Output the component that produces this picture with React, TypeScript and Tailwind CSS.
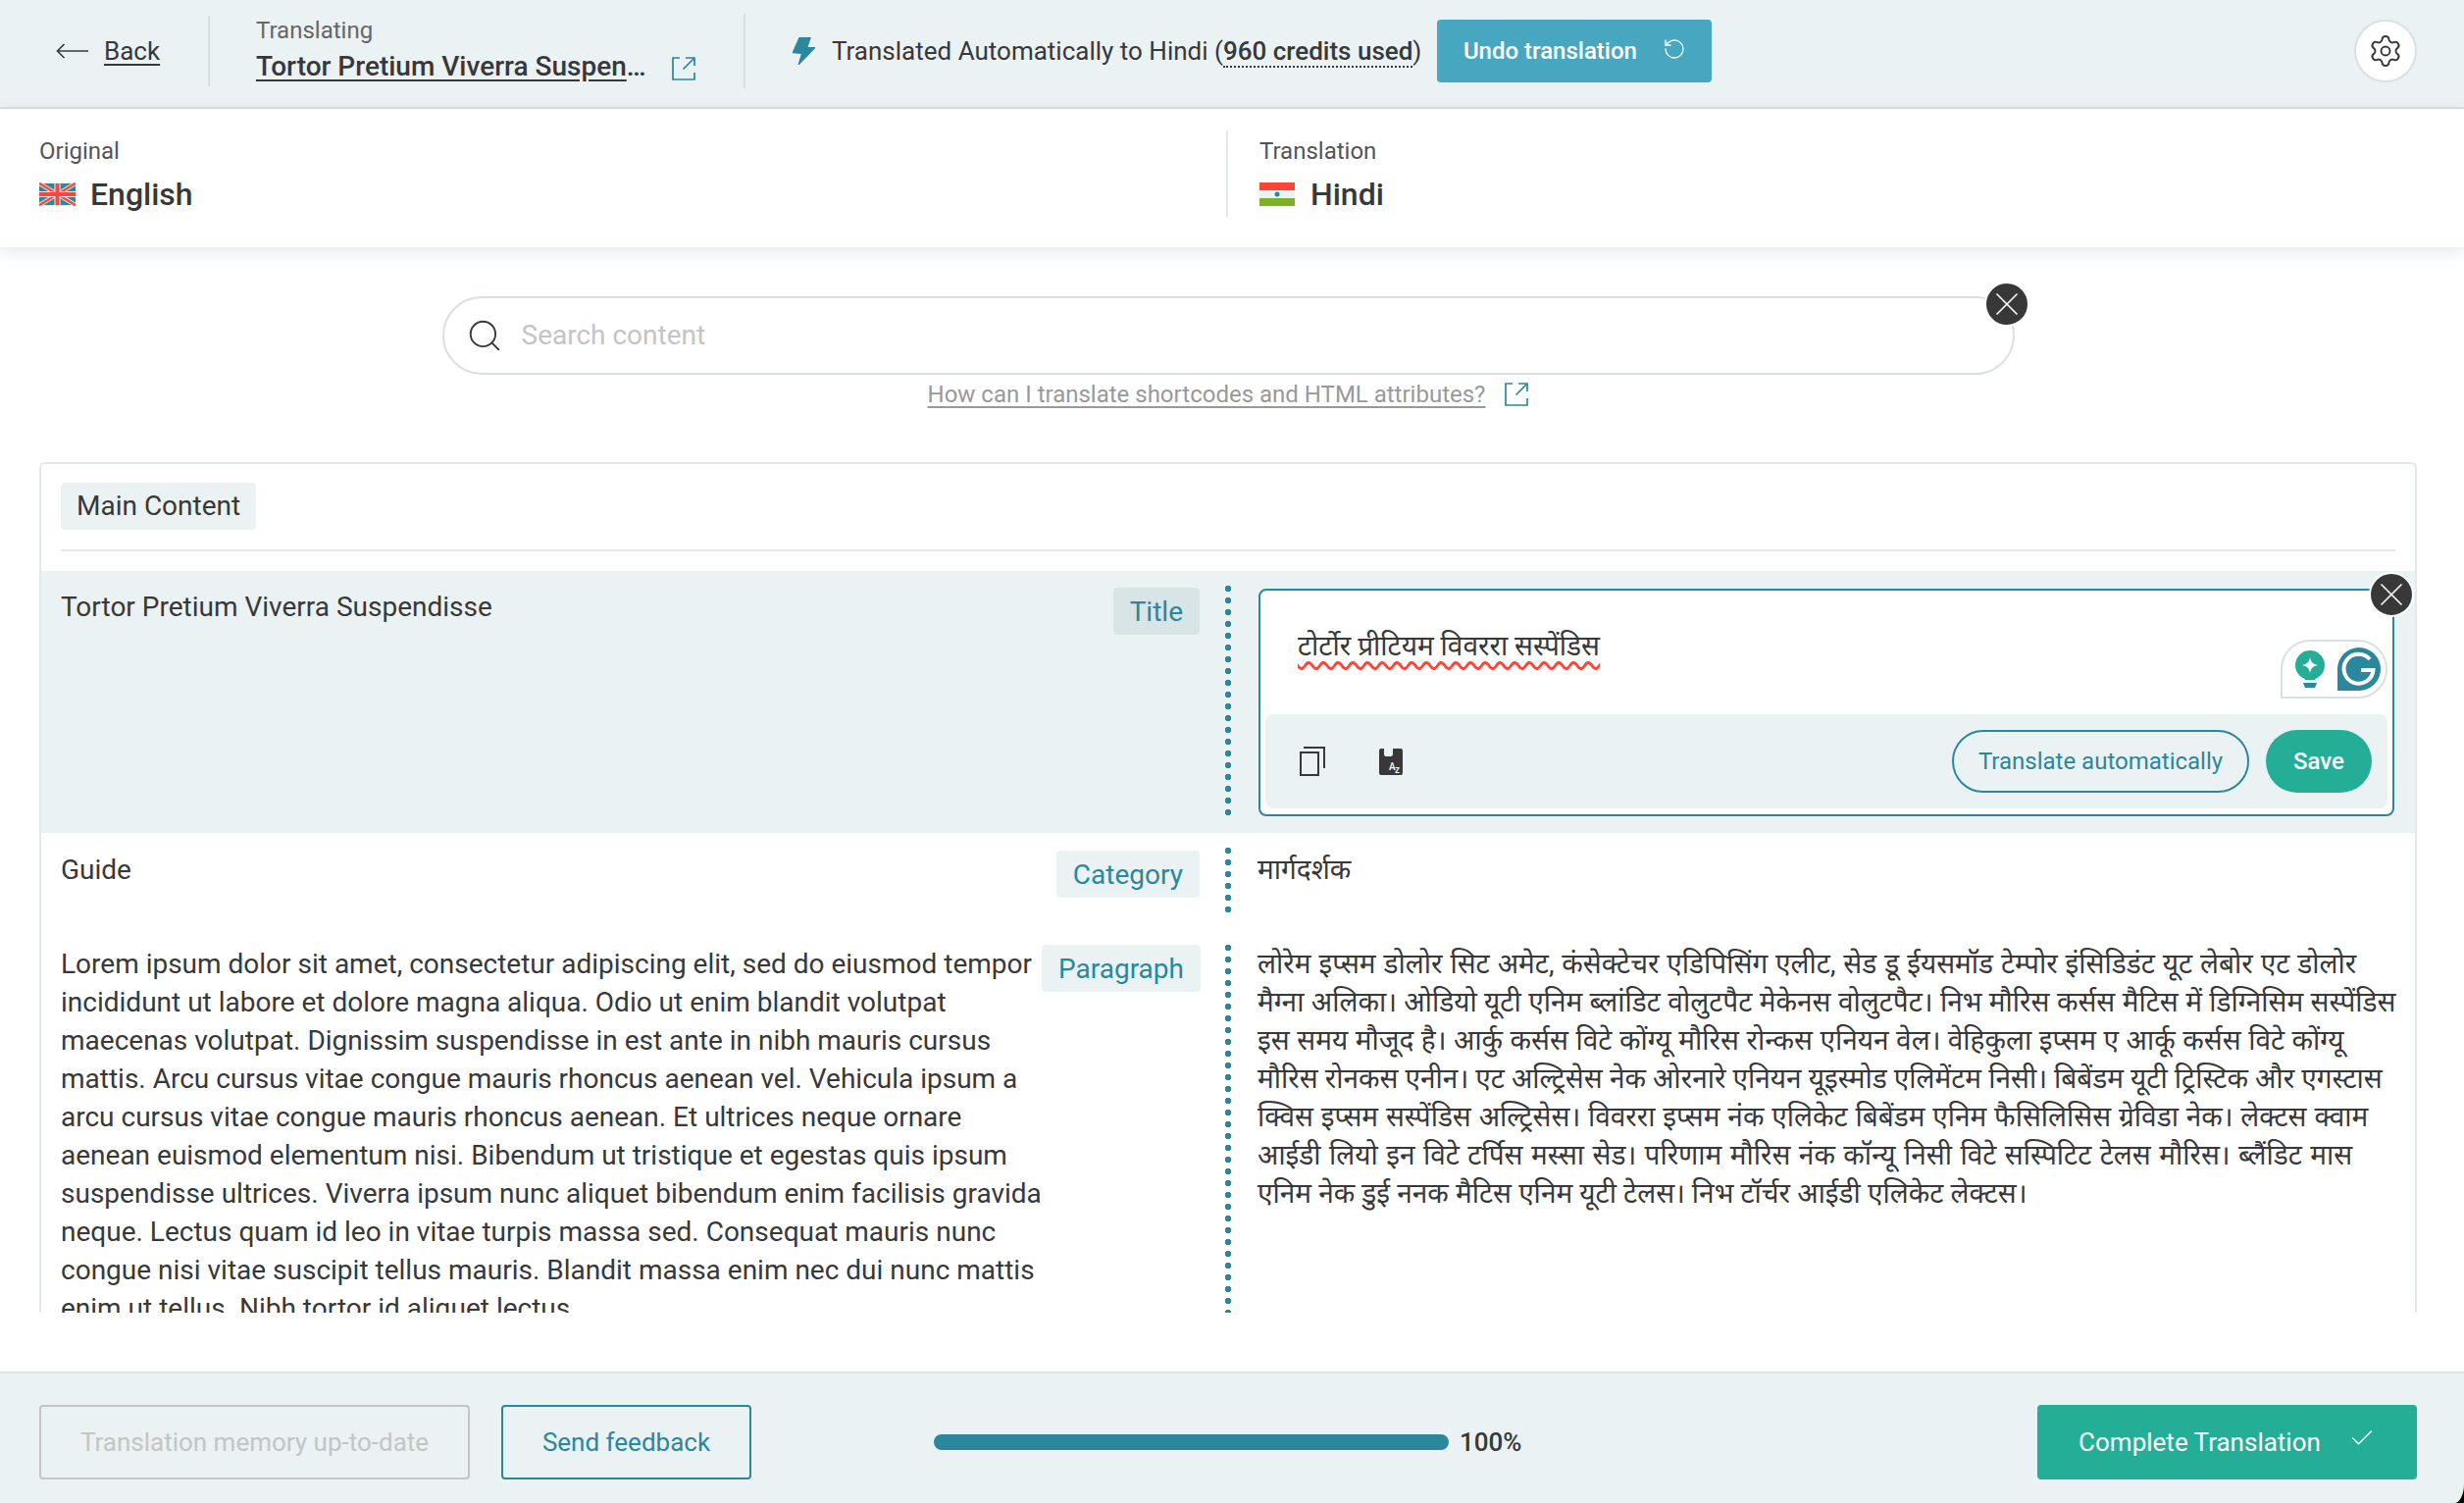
import { Check, RotateCcw, Search, Settings, X } from "lucide-react";

const ROBOTO = "font-['Roboto','Noto_Sans',sans-serif]";

const paragraph =
  "Lorem ipsum dolor sit amet, consectetur adipiscing elit, sed do eiusmod tempor incididunt ut labore et dolore magna aliqua. Odio ut enim blandit volutpat maecenas volutpat. Dignissim suspendisse in est ante in nibh mauris cursus mattis. Arcu cursus vitae congue mauris rhoncus aenean vel. Vehicula ipsum a arcu cursus vitae congue mauris rhoncus aenean. Et ultrices neque ornare aenean euismod elementum nisi. Bibendum ut tristique et egestas quis ipsum suspendisse ultrices. Viverra ipsum nunc aliquet bibendum enim facilisis gravida neque. Lectus quam id leo in vitae turpis massa sed. Consequat mauris nunc congue nisi vitae suscipit tellus mauris. Blandit massa enim nec dui nunc mattis enim ut tellus. Nibh tortor id aliquet lectus.";

const hindiLines = [
  { text: "लोरेम इप्सम डोलोर सिट अमेट, कंसेक्टेचर एडिपिसिंग एलीट, सेड डू ईयसमॉड टेम्पोर इंसिडिडंट यूट लेबोर एट डोलोर", spacing: "[word-spacing:1px]" },
  { text: "मैग्ना अलिका। ओडियो यूटी एनिम ब्लांडिट वोलुटपैट मेकेनस वोलुटपैट। निभ मौरिस कर्सस मैटिस में डिग्निसिम सस्पेंडिस", spacing: "[word-spacing:0.5px]" },
  { text: "इस समय मौजूद है। आर्कु कर्सस विटे कोंग्यू मौरिस रोन्कस एनियन वेल। वेहिकुला इप्सम ए आर्कू कर्सस विटे कोंग्यू", spacing: "[word-spacing:0.6px]" },
  { text: "मौरिस रोनकस एनीन। एट अल्ट्रिसेस नेक ओरनारे एनियन यूइस्मोड एलिमेंटम निसी। बिबेंडम यूटी ट्रिस्टिक और एगस्टास", spacing: "[word-spacing:0.2px]" },
  { text: "क्विस इप्सम सस्पेंडिस अल्ट्रिसेस। विवररा इप्सम नंक एलिकेट बिबेंडम एनिम फैसिलिसिस ग्रेविडा नेक। लेक्टस क्वाम", spacing: "[word-spacing:0.9px]" },
  { text: "आईडी लियो इन विटे टर्पिस मस्सा सेड। परिणाम मौरिस नंक कॉन्यू निसी विटे सस्पिटिट टेलस मौरिस। ब्लैंडिट मास", spacing: "[word-spacing:1.5px]" },
  { text: "एनिम नेक डुई ननक मैटिस एनिम यूटी टेलस। निभ टॉर्चर आईडी एलिकेट लेक्टस।", spacing: "[word-spacing:0.2px]" },
];

const ExternalIcon = ({ className }: { className: string }) => (
  <svg viewBox="0 0 24 24" fill="none" stroke="currentColor" strokeWidth="1.7" className={className}>
    <path d="M8 1H1v22h22v-7" />
    <path d="M11.5 12.5 23 1M14 1h9v8" />
  </svg>
);

const CloseBadge = ({ className }: { className: string }) => (
  <span className={`absolute flex h-[46px] w-[46px] items-center justify-center rounded-full border-2 border-white bg-[#383838] text-white ${className}`}>
    <X className="h-10 w-10" strokeWidth={1} />
  </span>
);

const Chip = ({ label, dark }: { label: string; dark?: boolean }) => (
  <span className={`flex h-12 shrink-0 items-center rounded-[4px] px-[17px] text-[28px] text-[#2b879b] ${dark ? "bg-[#d9e4e7]" : "bg-[#eaf2f4]"}`}>
    {label}
  </span>
);

const Dots = () => (
  <div className="absolute inset-y-3 left-[1249px] w-[6px] bg-[radial-gradient(circle,#2b879b_3px,transparent_3.4px)] bg-[length:6px_12px]" />
);

export default function App() {
  return (
    <div className={`flex h-[1532px] w-[2512px] flex-col overflow-hidden bg-white text-[#383838] ${ROBOTO}`}>
      {/* top bar */}
      <header className="flex h-[111px] shrink-0 items-center border-b-2 border-[#d9e0e3] bg-[#eaf2f4] pb-[5px] pr-[48px]">
        <a className="flex w-[212px] items-center pl-[57px] text-[26px]">
          <svg viewBox="0 0 33 16" fill="none" stroke="currentColor" strokeWidth="1.6" className="mr-[16px] h-4 w-[33px]">
            <path d="M33 8H1.5M8.5 1 1.5 8l7 7" />
          </svg>
          <span className="underline underline-offset-4">Back</span>
        </a>
        <div className="h-[72px] w-[2px] bg-[#d9e0e3]" />
        <div className="mb-[3px] flex w-[544px] flex-col pl-[47px]">
          <span className="text-[24px] leading-[30px] text-[#666]">Translating</span>
          <div className="mt-[4px] flex items-center">
            <span className="w-[404px] truncate text-[28px] font-medium leading-9 underline underline-offset-4">
              Tortor Pretium Viverra Suspendisse
            </span>
            <ExternalIcon className="ml-[20px] mt-1 h-6 w-6 text-[#2b879b]" />
          </div>
        </div>
        <div className="h-[76px] w-[2px] bg-[#d9e0e3]" />
        <svg viewBox="0 0 65 80" className="ml-[48px] h-7 w-[23px]">
          <path d="M20 0h32L42 30h23L17 80l10-33L0 45z" fill="#2b879b" stroke="#2b879b" strokeWidth="3" strokeLinejoin="round" />
        </svg>
        <span className="ml-[17px] text-[26px]">
          Translated Automatically to Hindi (
          <span className="border-b-2 border-dotted border-[#383838] font-medium">960 credits used</span>)
        </span>
        <button className="ml-[16px] flex h-16 w-[280px] items-center justify-center gap-[26px] rounded-[4px] bg-[#48a7c0] text-[24px] font-medium text-white">
          Undo translation
          <RotateCcw className="mb-1 h-6 w-6" strokeWidth={1.3} />
        </button>
        <button className="ml-auto flex h-16 w-16 items-center justify-center rounded-full border-2 border-[#d9e0e3] bg-white">
          <Settings className="h-9 w-9" strokeWidth={1.3} />
        </button>
      </header>

      {/* language bar */}
      <div className="z-10 grid h-[141px] shrink-0 grid-cols-[1250px_1fr] items-center bg-white pb-[10px] shadow-[0_4px_14px_rgba(130,160,170,0.25)]">
        <div className="pl-10">
          <p className="text-[24px] text-[#555]">Original</p>
          <div className="mt-[6px] flex items-center gap-[15px] text-[32px] font-medium leading-10">
            <svg viewBox="0 0 60 36" className="h-6 w-[37px]">
              <rect width="60" height="36" fill="#2b879b" />
              <path d="M0 0 60 36M60 0 0 36" stroke="#e4e4e4" strokeWidth="7" />
              <path d="M0 0 60 36M60 0 0 36" stroke="#ff4438" strokeWidth="4" />
              <path d="M30 0V36M0 18H60" stroke="#e4e4e4" strokeWidth="10" />
              <path d="M30 0V36M0 18H60" stroke="#ff4438" strokeWidth="6.5" />
            </svg>
            English
          </div>
        </div>
        <div className="flex h-[88px] flex-col justify-center border-l-2 border-[#e3e9eb] pl-8">
          <p className="text-[24px] text-[#555]">Translation</p>
          <div className="mt-[6px] flex items-center gap-[16px] text-[32px] font-medium leading-10">
            <svg viewBox="0 0 36 24" className="h-6 w-9">
              <rect width="36" height="8" fill="#ff4438" />
              <rect y="8" width="36" height="8" fill="#eaf2f4" />
              <rect y="16" width="36" height="8" fill="#7cb025" />
              <circle cx="18" cy="12" r="2.5" fill="#2b879b" />
            </svg>
            Hindi
          </div>
        </div>
      </div>

      {/* search */}
      <div className="flex shrink-0 flex-col items-center pr-2 pt-[50px]">
        <div className="relative flex h-20 w-[1603px] items-center rounded-full border-2 border-[#d9e0e3] pl-[22px]">
          <Search className="h-[38px] w-[38px]" strokeWidth={1.2} />
          <span className="ml-[19px] text-[28px] text-[#c4c4c4]">Search content</span>
          <CloseBadge className="-right-[17px] -top-[17px]" />
        </div>
        <div className="mt-[4px] flex items-center text-[24px] leading-8 text-[#999]">
          <span className="underline underline-offset-4">How can I translate shortcodes and HTML attributes?</span>
          <ExternalIcon className="ml-5 h-6 w-6 text-[#2b879b]" />
        </div>
      </div>

      {/* content card */}
      <div className="ml-10 mr-12 mt-[53px] h-[867px] shrink-0 overflow-hidden rounded-t-[6px] border-x-2 border-t-2 border-[#e3e9eb]">
        <div className="mx-5 flex h-[89px] items-start border-b-2 border-[#e3e9eb] pt-[19px]">
          <span className="flex h-12 items-center rounded-[4px] bg-[#eaf2f4] px-4 text-[28px]">Main Content</span>
        </div>
        <div className="relative -ml-[42px] mt-[20px] text-[28px] leading-[39px]">
          {/* title row */}
          <div className="relative flex h-[267px] bg-[#eaf2f4]">
            <Dots />
            <div className="flex w-[1223px] justify-between pl-[62px] pt-[17px]">
              <span>Tortor Pretium Viverra Suspendisse</span>
              <Chip label="Title" dark />
            </div>
            <div className="relative ml-[60px] mt-[18px] h-[232px] w-[1158px] rounded-[8px] border-2 border-[#2b879b] bg-white p-[5px]">
              <CloseBadge className="-right-[22px] -top-[19px]" />
              <div className="h-[121px] pl-[33px] pt-[32px]">
                <span className="underline decoration-[#ff4438] decoration-wavy decoration-[3px] underline-offset-[6px]">
                  टोर्टोर प्रीटियम विवररा सस्पेंडिस
                </span>
              </div>
              <div className="absolute right-[5px] top-[50px] flex h-[60px] w-[109px] items-center gap-[13px] rounded-[30px] rounded-bl-none border-2 border-[#d9e0e3] bg-white pl-[13px]">
                <svg viewBox="0 0 30 38" className="h-[38px] w-[30px]">
                  <circle cx="15" cy="15" r="15" fill="#24ae97" />
                  <path d="M8 24h14l-2 6h-10z" fill="#24ae97" />
                  <path d="M15 7c1 5 3 7 8 8-5 1-7 3-8 8-1-5-3-7-8-8 5-1 7-3 8-8z" fill="#fff" />
                  <path d="M8 33h14l-2 5h-10z" fill="#2b879b" />
                </svg>
                <svg viewBox="0 0 44 44" className="h-11 w-11">
                  <path d="M0 44V22a22 22 0 1 1 22 22z" fill="#2b879b" />
                  <path d="M33 12a15 15 0 1 0 3.5 11H24" fill="none" stroke="#fff" strokeWidth="4" />
                </svg>
              </div>
              <div className="flex h-24 items-center rounded-[8px] bg-[#eaf2f4] pl-[35px] pr-4">
                <svg viewBox="0 0 26 30" fill="none" stroke="#383838" strokeWidth="2" className="h-[30px] w-[26px]">
                  <path d="M4 1h21v21" />
                  <rect x="1" y="6" width="18" height="23" />
                </svg>
                <svg viewBox="0 0 24 27" className="ml-[55px] h-[27px] w-6">
                  <path d="M0 2a2 2 0 0 1 2-2h3v6a2 2 0 0 0 2 2h5a2 2 0 0 0 2-2V0h8a2 2 0 0 1 2 2v23a2 2 0 0 1-2 2H2a2 2 0 0 1-2-2z" fill="#383838" />
                  <text x="10" y="22" fontSize="10" fontWeight="500" fill="#fff" fontFamily="Roboto">A</text>
                  <text x="16" y="25" fontSize="10" fontWeight="500" fill="#fff" fontFamily="Roboto">z</text>
                </svg>
                <button className="ml-auto flex h-16 w-[303px] items-center justify-center rounded-full border-2 border-[#2b879b] text-[24px] text-[#2b879b]">
                  Translate automatically
                </button>
                <button className="ml-[17px] flex h-16 w-[108px] items-center justify-center rounded-full bg-[#24ae97] text-[24px] font-medium text-white">
                  Save
                </button>
              </div>
            </div>
          </div>

          {/* category row */}
          <div className="relative flex h-[99px]">
            <Dots />
            <div className="flex w-[1223px] justify-between pl-[62px] pt-[18px]">
              <span>Guide</span>
              <Chip label="Category" />
            </div>
            <div className="ml-[59px] pt-[18px]">मार्गदर्शक</div>
          </div>

          {/* paragraph row */}
          <div className="relative flex h-[600px]">
            <Dots />
            <div className="flex w-[1223px] justify-between pl-[62px] pt-[15px]">
              <p className="w-[1000px] shrink-0">{paragraph}</p>
              <Chip label="Paragraph" />
            </div>
            <div className="ml-[59px] whitespace-nowrap pt-[15px]">
              {hindiLines.map((line) => (
                <div key={line.text} className={line.spacing}>{line.text}</div>
              ))}
            </div>
          </div>
        </div>
      </div>

      {/* footer */}
      <div className="mt-[60px] h-[134px] shrink-0 bg-black">
        <footer className="flex h-[134px] items-center rounded-br-[10px_19px] border-t-2 border-[#dfe5e7] bg-[#eaf2f4] pl-10 pr-12 pt-2">
          <button className="flex h-[76px] w-[439px] items-center justify-center rounded-[4px] border-2 border-[#c4c4c4] text-[26px] text-[#c4c4c4]">
            Translation memory up-to-date
          </button>
          <button className="ml-8 flex h-[76px] w-[255px] items-center justify-center rounded-[4px] border-2 border-[#2b879b] text-[26px] text-[#2b879b]">
            Send feedback
          </button>
          <div className="ml-[186px] h-4 w-[525px] rounded-full bg-[#2b879b]" />
          <span className="ml-[11px] text-[26px] font-medium">100%</span>
          <button className="ml-auto flex h-[76px] w-[387px] items-center justify-center gap-[28px] rounded-[4px] bg-[#24ae97] text-[26px] text-white">
            Complete Translation
            <Check className="mb-2 h-7 w-7" strokeWidth={1.2} />
          </button>
        </footer>
      </div>
    </div>
  );
}
